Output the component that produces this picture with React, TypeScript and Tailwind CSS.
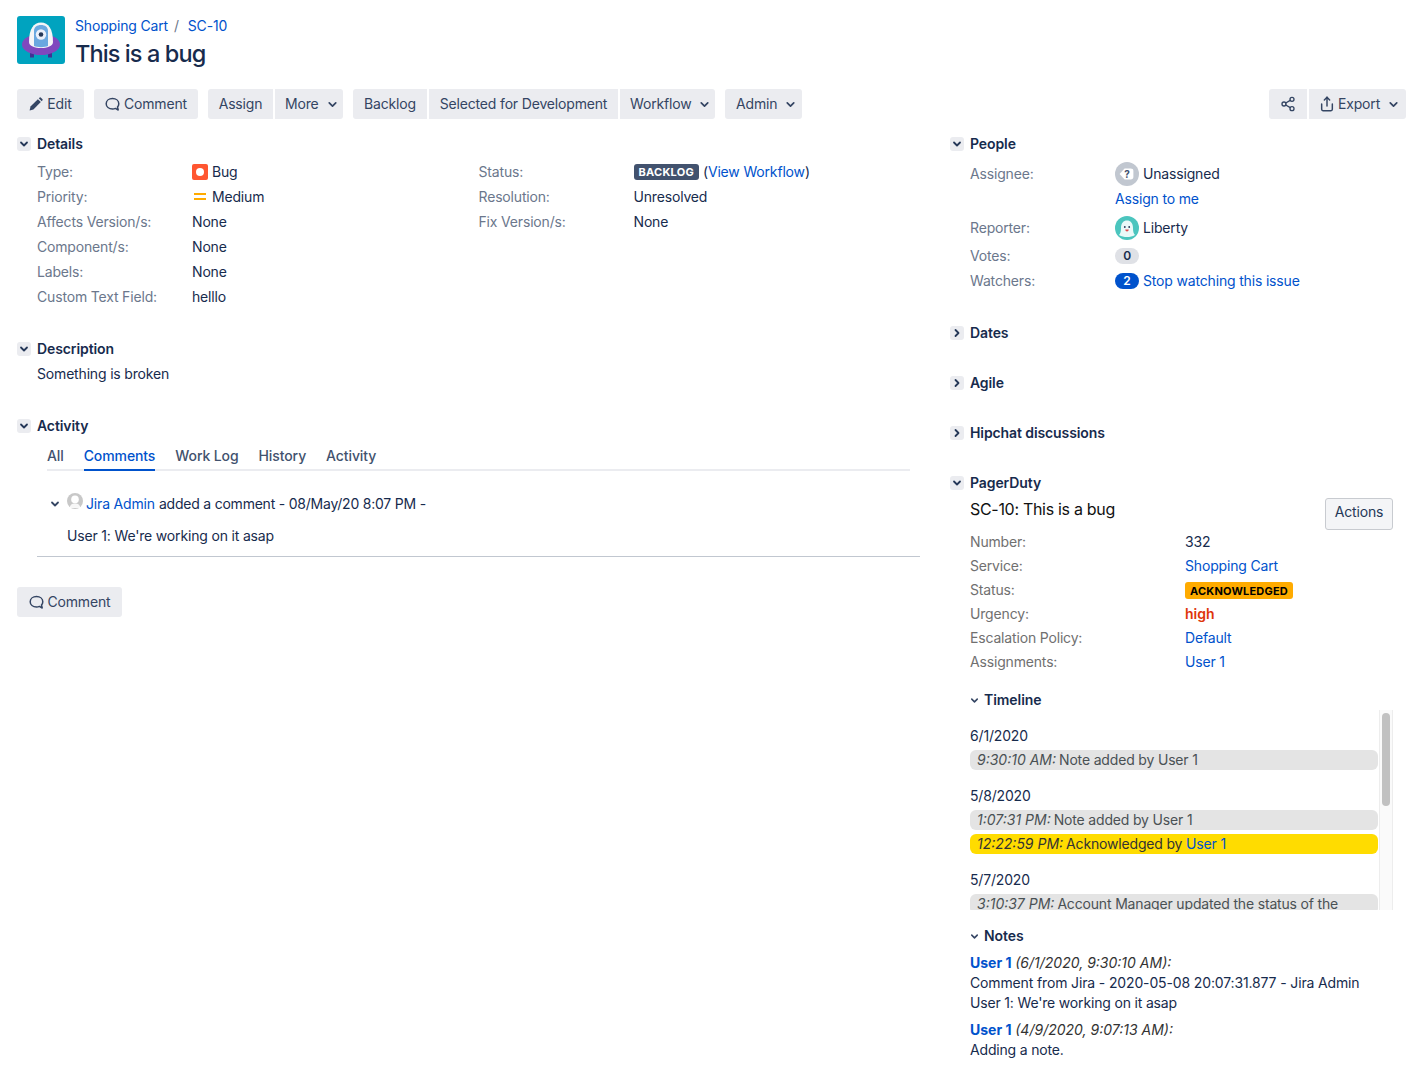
import React from "react";
import { ChevronDown, ChevronRight, Share2, Share } from "lucide-react";

const link = "text-[#0052CC]";

function Btn({ children, className = "" }: { children: React.ReactNode; className?: string }) {
  return (
    <div className={`h-[30px] flex items-center justify-center bg-[#EBECF0] rounded-[3px] text-[#344563] whitespace-nowrap ${className}`}>
      {children}
    </div>
  );
}

function Caret() {
  return <ChevronDown size={13} strokeWidth={3.2} className="text-[#344563]" />;
}

function Pencil() {
  return (
    <svg width="14" height="14" viewBox="0 0 14 14" className="mr-[4px]">
      <path d="M0.6 13.4 L1.5 9.6 L8.9 2.2 L11.8 5.1 L4.4 12.5 Z" fill="#344563" />
      <path d="M9.8 1.3 L10.7 0.5 Q11.2 0.1 11.7 0.5 L13.5 2.3 Q13.9 2.8 13.5 3.3 L12.7 4.2 Z" fill="#344563" />
    </svg>
  );
}

function Bubble() {
  return (
    <svg width="15" height="15" viewBox="0 0 15 15" className="mr-[4px]" fill="none">
      <path d="M7.5 1.6 C3.9 1.6 1.2 3.8 1.2 6.8 C1.2 9.8 3.9 12 7.5 12 C8.6 12 9.6 11.8 10.4 11.4 L13.2 13 L12.5 10 C13.4 9.1 13.8 8 13.8 6.8 C13.8 3.8 11.1 1.6 7.5 1.6 Z" stroke="#344563" strokeWidth="1.5" strokeLinejoin="round" />
    </svg>
  );
}

function Toggle({ open = true }: { open?: boolean }) {
  return (
    <div className="w-[14px] h-[14px] bg-[#EBECF0] rounded-[3px] flex items-center justify-center shrink-0">
      {open ? (
        <ChevronDown size={12} strokeWidth={3.6} className="text-[#253858]" />
      ) : (
        <ChevronRight size={12} strokeWidth={3.6} className="text-[#253858]" />
      )}
    </div>
  );
}

function Heading({ title, open = true, className = "" }: { title: string; open?: boolean; className?: string }) {
  return (
    <div className={`flex items-center h-[20px] ${className}`}>
      <Toggle open={open} />
      <span className="ml-[6px] font-semibold tracking-[-0.1px] text-[#172B4D]">{title}</span>
    </div>
  );
}

function Row({ label, children, w }: { label: string; children: React.ReactNode; w: string }) {
  return (
    <div className="flex h-[25px] items-center">
      <div className={`${w} text-[#6B778C] shrink-0`}>{label}</div>
      <div className="flex items-center">{children}</div>
    </div>
  );
}

function PdRow({ label, children }: { label: string; children: React.ReactNode }) {
  return (
    <div className="flex h-[24px] items-center">
      <div className="w-[215px] text-[#707070] shrink-0">{label}</div>
      <div className="flex items-center">{children}</div>
    </div>
  );
}

function Chip({ time, children, yellow = false }: { time: string; children: React.ReactNode; yellow?: boolean }) {
  return (
    <div className={`h-[20px] rounded-[6px] pl-[7px] flex items-center whitespace-nowrap overflow-hidden ${yellow ? "bg-[#FFDC00] text-[#333]" : "bg-[#E4E4E4] text-[#4a5154]"}`}>
      <i className="mr-[3px] tracking-[0px]">{time}</i>
      <span>{children}</span>
    </div>
  );
}

function Logo() {
  return (
    <svg width="48" height="48" viewBox="0 0 48 48" className="rounded-[3px] shrink-0">
      <rect width="48" height="48" fill="#00A3BF" />
      <rect x="13" y="36" width="4" height="5.5" fill="#403294" />
      <rect x="31" y="36" width="4" height="5.5" fill="#403294" />
      <ellipse cx="24" cy="28.5" rx="19" ry="10.5" fill="#8048BE" />
      <path d="M12 26 C12 13 16.5 6.5 24 6.5 C31.5 6.5 36 13 36 26 C36 30 30 32 24 32 C18 32 12 30 12 26 Z" fill="#F4F5F7" />
      <path d="M17 30 L17 15 C17 11 20 9 24 9 C28 9 31 11 31 15 L31 30 C28 31.5 20 31.5 17 30 Z" fill="#6AA8E0" />
      <circle cx="24" cy="18.5" r="5.2" fill="#EAF0FA" />
      <circle cx="24" cy="18.5" r="2.3" fill="#253858" />
    </svg>
  );
}

function UnknownAvatar() {
  return (
    <svg width="24" height="24" viewBox="0 0 24 24" className="shrink-0">
      <circle cx="12" cy="12" r="12" fill="#C1C7D0" />
      <path d="M4.6 12 L9.6 6.6 H15.5 Q18.4 6.6 18.4 9 V15 Q18.4 17.4 15.5 17.4 H9.6 Z" fill="#fff" />
      <text x="12" y="15.6" textAnchor="middle" fontSize="10" fontWeight="700" fill="#42526E" fontFamily="Inter">?</text>
    </svg>
  );
}

function LibertyAvatar() {
  return (
    <svg width="24" height="24" viewBox="0 0 24 24" className="shrink-0">
      <circle cx="12" cy="12" r="12" fill="#4BC5BE" />
      <path d="M4 19 C5.5 17.5 6 15.5 6 12 C6 7 8.5 4.5 12 4.5 C15.5 4.5 18 7 18 12 C18 15.5 18.5 17.5 20 19 C17.5 20.5 15 21 12 21 C9 21 6.5 20.5 4 19 Z" fill="#EAF9F8" />
      <circle cx="9.8" cy="11" r="0.9" fill="#253858" />
      <circle cx="14.2" cy="11" r="0.9" fill="#253858" />
      <path d="M10.2 13.6 H13.8 Q13.6 15.6 12 15.6 Q10.4 15.6 10.2 13.6 Z" fill="#E5484D" />
    </svg>
  );
}

function GreyUser() {
  return (
    <svg width="16" height="16" viewBox="0 0 16 16" className="shrink-0">
      <circle cx="8" cy="8" r="8" fill="#C8C8C8" />
      <circle cx="8" cy="6.4" r="3.8" fill="#fff" />
      <path d="M2.6 15 C3 11.6 5 10.4 8 10.4 C11 10.4 13 11.6 13.4 15 Z" fill="#fff" opacity="0.85" />
    </svg>
  );
}

function ChevronSmall() {
  return <ChevronDown size={12} strokeWidth={3.6} className="text-[#344563] shrink-0 ml-[1px]" />;
}

export default function App() {
  return (
    <div className="w-[1424px] h-[1085px] overflow-hidden bg-white text-[14px] leading-[20px] tracking-[-0.17px] text-[#172B4D] font-['Inter',sans-serif]">
      {/* header */}
      <div className="flex pl-[17px] pt-[16px] h-[89px]">
        <Logo />
        <div className="ml-[10px]">
          <div className="flex h-[20px] items-center">
            <span className={link}>Shopping Cart</span>
            <span className="text-[#6B778C] ml-[6px]">/</span>
            <span className={`${link} ml-[9px]`}>SC-10</span>
          </div>
          <div className="text-[23.5px] leading-[32px] font-medium text-[#172B4D] tracking-[-0.9px] mt-[2px]">This is a bug</div>
        </div>
      </div>

      {/* toolbar */}
      <div className="flex justify-between pl-[17px] pr-[18px] h-[30px]">
        <div className="flex">
          <Btn className="w-[67px]"><Pencil />Edit</Btn>
          <Btn className="w-[104px] ml-[10px]"><Bubble />Comment</Btn>
          <Btn className="w-[65px] ml-[10px] rounded-r-none">Assign</Btn>
          <Btn className="w-[68px] ml-[2px] rounded-l-none gap-[7px] !justify-start pl-[10px]">More<Caret /></Btn>
          <Btn className="w-[74px] ml-[10px] rounded-r-none">Backlog</Btn>
          <Btn className="w-[189px] ml-[2px] rounded-none">Selected for Development</Btn>
          <Btn className="w-[95px] ml-[2px] rounded-l-none gap-[7px] !justify-start pl-[10px]">Workflow<Caret /></Btn>
          <Btn className="w-[77px] ml-[10px] gap-[7px] !justify-start pl-[11px]">Admin<Caret /></Btn>
        </div>
        <div className="flex">
          <Btn className="w-[38px] rounded-r-none"><Share2 size={16} strokeWidth={2} /></Btn>
          <Btn className="w-[97px] ml-[2px] rounded-l-none !justify-start pl-[10px]"><Share size={16} strokeWidth={2.2} className="mr-[3px]" />Export<span className="ml-[7px] flex"><Caret /></span></Btn>
        </div>
      </div>

      {/* columns */}
      <div className="flex pl-[17px] pt-[15px]">
        {/* left */}
        <div className="w-[903px] shrink-0">
          <Heading title="Details" />
          <div className="pl-[20px] pt-[5px] flex h-[185px]">
            <div className="w-[441.5px] shrink-0">
              <Row w="w-[155px]" label="Type:">
                <span className="w-[16px] h-[16px] rounded-[2px] bg-[#FF5630] flex items-center justify-center mr-[4px]"><span className="w-[8px] h-[8px] rounded-full bg-white" /></span>Bug
              </Row>
              <Row w="w-[155px]" label="Priority:">
                <span className="w-[16px] h-[16px] flex flex-col items-center justify-center gap-[3px] mr-[4px]"><span className="w-[12px] h-[2px] bg-[#FFAB00]" /><span className="w-[12px] h-[2px] bg-[#FFAB00]" /></span>Medium
              </Row>
              <Row w="w-[155px]" label="Affects Version/s:">None</Row>
              <Row w="w-[155px]" label="Component/s:">None</Row>
              <Row w="w-[155px]" label="Labels:">None</Row>
              <Row w="w-[155px]" label="Custom Text Field:">helllo</Row>
            </div>
            <div>
              <Row w="w-[155px]" label="Status:">
                <span className="h-[16px] px-[5px] rounded-[3px] bg-[#42526E] text-white text-[11px] font-bold leading-[16px] tracking-[0.25px] mr-[4px]">BACKLOG</span>
                <span>(<span className={link}>View Workflow</span>)</span>
              </Row>
              <Row w="w-[155px]" label="Resolution:">Unresolved</Row>
              <Row w="w-[155px]" label="Fix Version/s:">None</Row>
            </div>
          </div>

          <Heading title="Description" />
          <div className="pl-[20px] pt-[5px] h-[57px]">Something is broken</div>

          <Heading title="Activity" />
          <div className="pl-[30px] pr-[10px] mt-[10px]">
            <div className="flex border-b-2 border-[#EBECF0] h-[25px] text-[#42526E] font-medium tracking-[-0.1px]">
              <div className="pr-[20px]">All</div>
              <div className="mr-[20px] h-[25px] text-[#0052CC] border-b-2 border-[#0052CC]">Comments</div>
              <div className="pr-[20px]">Work Log</div>
              <div className="pr-[20px]">History</div>
              <div>Activity</div>
            </div>
          </div>
          <div className="ml-[20px] h-[86px] border-b border-[#C1C7D0] pt-[23px]">
            <div className="flex items-center h-[20px] pl-[11px]">
              <ChevronSmall />
              <span className="ml-[6px] -mt-[6px]"><GreyUser /></span>
              <span className={`${link} ml-[3px]`}>Jira Admin</span>
              <span className="ml-[4px] tracking-[-0.22px]">added a comment - 08/May/20 8:07 PM -</span>
            </div>
            <div className="pl-[30px] mt-[12px]">User 1: We're working on it asap</div>
          </div>
          <div className="mt-[30px] w-[105px]">
            <Btn><Bubble />Comment</Btn>
          </div>
        </div>

        {/* right */}
        <div className="ml-[30px] w-[443px] shrink-0">
          <Heading title="People" />
          <div className="pl-[20px] pt-[2px]">
            <div className="flex h-[36px]">
              <div className="w-[145px] text-[#6B778C] pt-[8px]">Assignee:</div>
              <div className="flex items-center gap-[4px] h-[36px]"><UnknownAvatar />Unassigned</div>
            </div>
            <div className="flex h-[20px] mt-[-3px]"><div className="w-[145px]" /><span className={link}>Assign to me</span></div>
            <div className="flex h-[24px] mt-[7px] items-center"><div className="w-[145px] text-[#6B778C]">Reporter:</div><div className="flex items-center gap-[4px]"><LibertyAvatar />Liberty</div></div>
            <div className="flex h-[20px] mt-[6px] items-center">
              <div className="w-[145px] text-[#6B778C]">Votes:</div>
              <span className="w-[24px] h-[16px] rounded-full bg-[#DFE1E6] text-[12px] leading-[16px] font-semibold text-center">0</span>
            </div>
            <div className="flex h-[20px] mt-[5px] items-center">
              <div className="w-[145px] text-[#6B778C]">Watchers:</div>
              <span className="w-[24px] h-[16px] rounded-full bg-[#0052CC] text-white text-[12px] leading-[16px] font-semibold text-center mr-[4px]">2</span>
              <span className={link}>Stop watching this issue</span>
            </div>
          </div>
          <Heading title="Dates" open={false} className="mt-[32px]" />
          <Heading title="Agile" open={false} className="mt-[30px]" />
          <Heading title="Hipchat discussions" open={false} className="mt-[30px]" />
          <Heading title="PagerDuty" className="mt-[30px]" />

          <div className="pl-[20px]">
            <div className="flex justify-between items-start h-[37px]">
              <div className="text-[16px] leading-[22px] tracking-[-0.3px] text-[#111] mt-[5px]">SC-10: This is a bug</div>
              <div className="w-[68px] h-[32px] mt-[5px] flex items-center justify-center bg-[#F4F5F7] border border-[#C8CBD0] rounded-[3px] text-[#253858] pb-[5px]">Actions</div>
            </div>
            <PdRow label="Number:">332</PdRow>
            <PdRow label="Service:"><span className={link}>Shopping Cart</span></PdRow>
            <PdRow label="Status:">
              <span className="h-[17px] px-[5px] rounded-[3px] bg-[#FFAB00] text-black text-[11px] leading-[18px] font-bold tracking-[0.2px]">ACKNOWLEDGED</span>
            </PdRow>
            <PdRow label="Urgency:"><span className="font-semibold tracking-[0px] text-[#DE350B]">high</span></PdRow>
            <PdRow label="Escalation Policy:"><span className={link}>Default</span></PdRow>
            <PdRow label="Assignments:"><span className={link}>User 1</span></PdRow>

            <div className="flex items-center h-[20px] mt-[16px]">
              <ChevronDown size={11} strokeWidth={3.4} className="text-[#344563] ml-[-1px] mr-[4px]" />
              <span className="font-semibold tracking-[-0.05px]">Timeline</span>
            </div>

            <div className="flex h-[200px] w-[423px] overflow-hidden">
              <div className="w-[408px] shrink-0 overflow-hidden pt-[16px]">
                <div className="h-[20px]">6/1/2020</div>
                <div className="mt-[4px]"><Chip time="9:30:10 AM:">Note added by User 1</Chip></div>
                <div className="h-[20px] mt-[16px]">5/8/2020</div>
                <div className="mt-[4px]"><Chip time="1:07:31 PM:">Note added by User 1</Chip></div>
                <div className="mt-[4px]"><Chip yellow time="12:22:59 PM:">Acknowledged by <span className={link}>User 1</span></Chip></div>
                <div className="h-[20px] mt-[16px]">5/7/2020</div>
                <div className="mt-[4px]"><Chip time="3:10:37 PM:">Account Manager updated the status of the</Chip></div>
              </div>
              <div className="ml-[1px] w-[14px] bg-[#FAFAFA] border-x border-[#EDEDED] pt-[3px] flex justify-center">
                <div className="w-[8px] h-[93px] rounded-full bg-[#C1C1C1]" />
              </div>
            </div>

            <div className="flex items-center h-[20px] mt-[16px]">
              <ChevronDown size={11} strokeWidth={3.4} className="text-[#344563] ml-[-1px] mr-[4px]" />
              <span className="font-semibold tracking-[-0.05px]">Notes</span>
            </div>
            <div className="mt-[7px]">
              <div><span className={`${link} font-bold tracking-[0px]`}>User 1</span> <i className="text-[#333] tracking-[0px]">(6/1/2020, 9:30:10 AM):</i></div>
              <div className="tracking-[-0.14px]">Comment from Jira - 2020-05-08 20:07:31.877 - Jira Admin</div>
              <div>User 1: We're working on it asap</div>
              <div className="mt-[7px]"><span className={`${link} font-bold tracking-[0px]`}>User 1</span> <i className="text-[#333] tracking-[0px]">(4/9/2020, 9:07:13 AM):</i></div>
              <div>Adding a note.</div>
            </div>
          </div>
        </div>
      </div>
    </div>
  );
}
